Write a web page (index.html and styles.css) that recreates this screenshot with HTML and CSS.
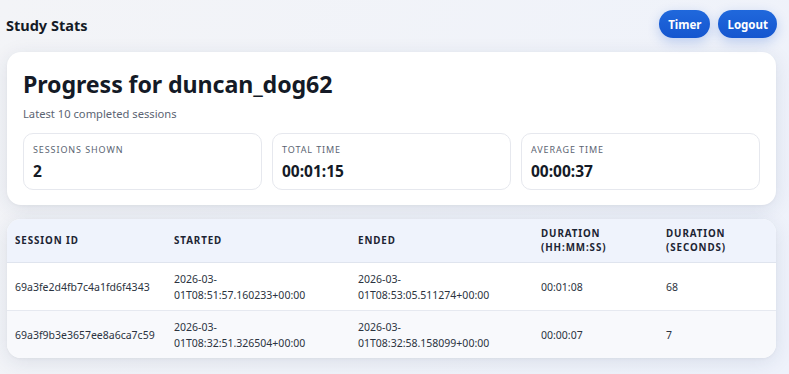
FILE: index.html
```html
<!DOCTYPE html>
<html lang="en">
<head>
    <meta charset="UTF-8">
    <meta name="viewport" content="width=device-width, initial-scale=1.0">
    <title>Study Stats</title>
    <link rel="stylesheet" href="styles.css">
</head>
<body>
    <header class="topbar">
        <div class="brand">Study Stats</div>
        <nav class="actions">
            <button type="button" class="pill">Timer</button>
            <button type="button" class="pill">Logout</button>
        </nav>
    </header>

    <section class="card summary">
        <h1>Progress for duncan_dog62</h1>
        <p class="muted">Latest 10 completed sessions</p>
        <div class="stats">
            <div class="stat">
                <div class="stat-label">Sessions shown</div>
                <div class="stat-value">2</div>
            </div>
            <div class="stat">
                <div class="stat-label">Total time</div>
                <div class="stat-value">00:01:15</div>
            </div>
            <div class="stat">
                <div class="stat-label">Average time</div>
                <div class="stat-value">00:00:37</div>
            </div>
        </div>
    </section>

    <section class="card table-card">
        <table class="sessions">
            <colgroup>
                <col class="c-id">
                <col class="c-start">
                <col class="c-end">
                <col class="c-dur">
                <col class="c-sec">
            </colgroup>
            <thead>
                <tr>
                    <th>Session ID</th>
                    <th>Started</th>
                    <th>Ended</th>
                    <th>Duration<br>(hh:mm:ss)</th>
                    <th>Duration<br>(seconds)</th>
                </tr>
            </thead>
            <tbody>
                <tr>
                    <td>69a3fe2d4fb7c4a1fd6f4343</td>
                    <td>2026-03-<br>01T08:51:57.160233+00:00</td>
                    <td>2026-03-<br>01T08:53:05.511274+00:00</td>
                    <td>00:01:08</td>
                    <td>68</td>
                </tr>
                <tr>
                    <td>69a3f9b3e3657ee8a6ca7c59</td>
                    <td>2026-03-<br>01T08:32:51.326504+00:00</td>
                    <td>2026-03-<br>01T08:32:58.158099+00:00</td>
                    <td>00:00:07</td>
                    <td>7</td>
                </tr>
            </tbody>
        </table>
    </section>
</body>
</html>
```

FILE: styles.css
```css
body { font-family: "Noto Sans", "Open Sans", Arial, sans-serif; background: linear-gradient(120deg, #f3f4f7 0%, #eef2fb 100%); margin: 0; padding: 8px 13px 20px 7px; color: #141a26; min-height: 374px; box-sizing: border-box; }
.topbar { display: flex; justify-content: space-between; align-items: center; height: 31px; margin-bottom: 13px; }
.brand { font-weight: 700; font-size: 14.5px; margin-top: 2px; margin-left: -1px; }
.actions { display: flex; gap: 8px; margin-top: 1px; margin-right: -1px; }
.pill { height: 28px; padding: 0 9px; border: none; border-radius: 14px; background: linear-gradient(180deg, #2068dc 0%, #1556cf 100%); color: #fff; font-family: inherit; font-size: 11.5px; font-weight: 700; box-shadow: 0 4px 12px rgba(30,90,210,0.25); cursor: pointer; }
.card { background: #fff; border-radius: 14px; box-shadow: 0 4px 20px rgba(30,45,90,0.10), 0 1px 3px rgba(0,0,0,0.04); }
.summary { padding: 14px 16px 15px 16px; margin-bottom: 14px; }
h1 { margin: 0; font-size: 23.2px; font-weight: 700; letter-spacing: -0.1px; line-height: 36px; }
.muted { margin: 4px 0 11px; color: #5b6472; font-size: 11.2px; line-height: 16px; }
.stats { display: grid; grid-template-columns: repeat(3, 1fr); gap: 10px; }
.stat { border: 1px solid #e6e8ee; border-radius: 10px; padding: 10px 9px 8px; height: 57px; box-sizing: border-box; }
.stat-label { text-transform: uppercase; font-size: 9px; letter-spacing: 0.9px; color: #5b6472; line-height: 12px; }
.stat-value { font-size: 15.5px; font-weight: 700; margin-top: 5px; line-height: 21px; }
.table-card { overflow: hidden; }
.sessions { width: 100%; border-collapse: collapse; table-layout: fixed; font-size: 10.5px; }
.c-id { width: 159px; }
.c-start { width: 184px; }
.c-end { width: 183px; }
.c-dur { width: 125px; }
.sessions th { text-align: left; text-transform: uppercase; font-size: 9.8px; font-weight: 700; letter-spacing: 0.9px; color: #1c2433; background: #eff3fc; padding: 0 8px; height: 43px; line-height: 14px; border-bottom: 1px solid #dfe4ee; }
.sessions td { padding: 0 8px; height: 47px; line-height: 16px; color: #2b3340; white-space: nowrap; }
.sessions tbody tr + tr td { border-top: 1px solid #e6e9f0; background: #f8f9fc; }
```
